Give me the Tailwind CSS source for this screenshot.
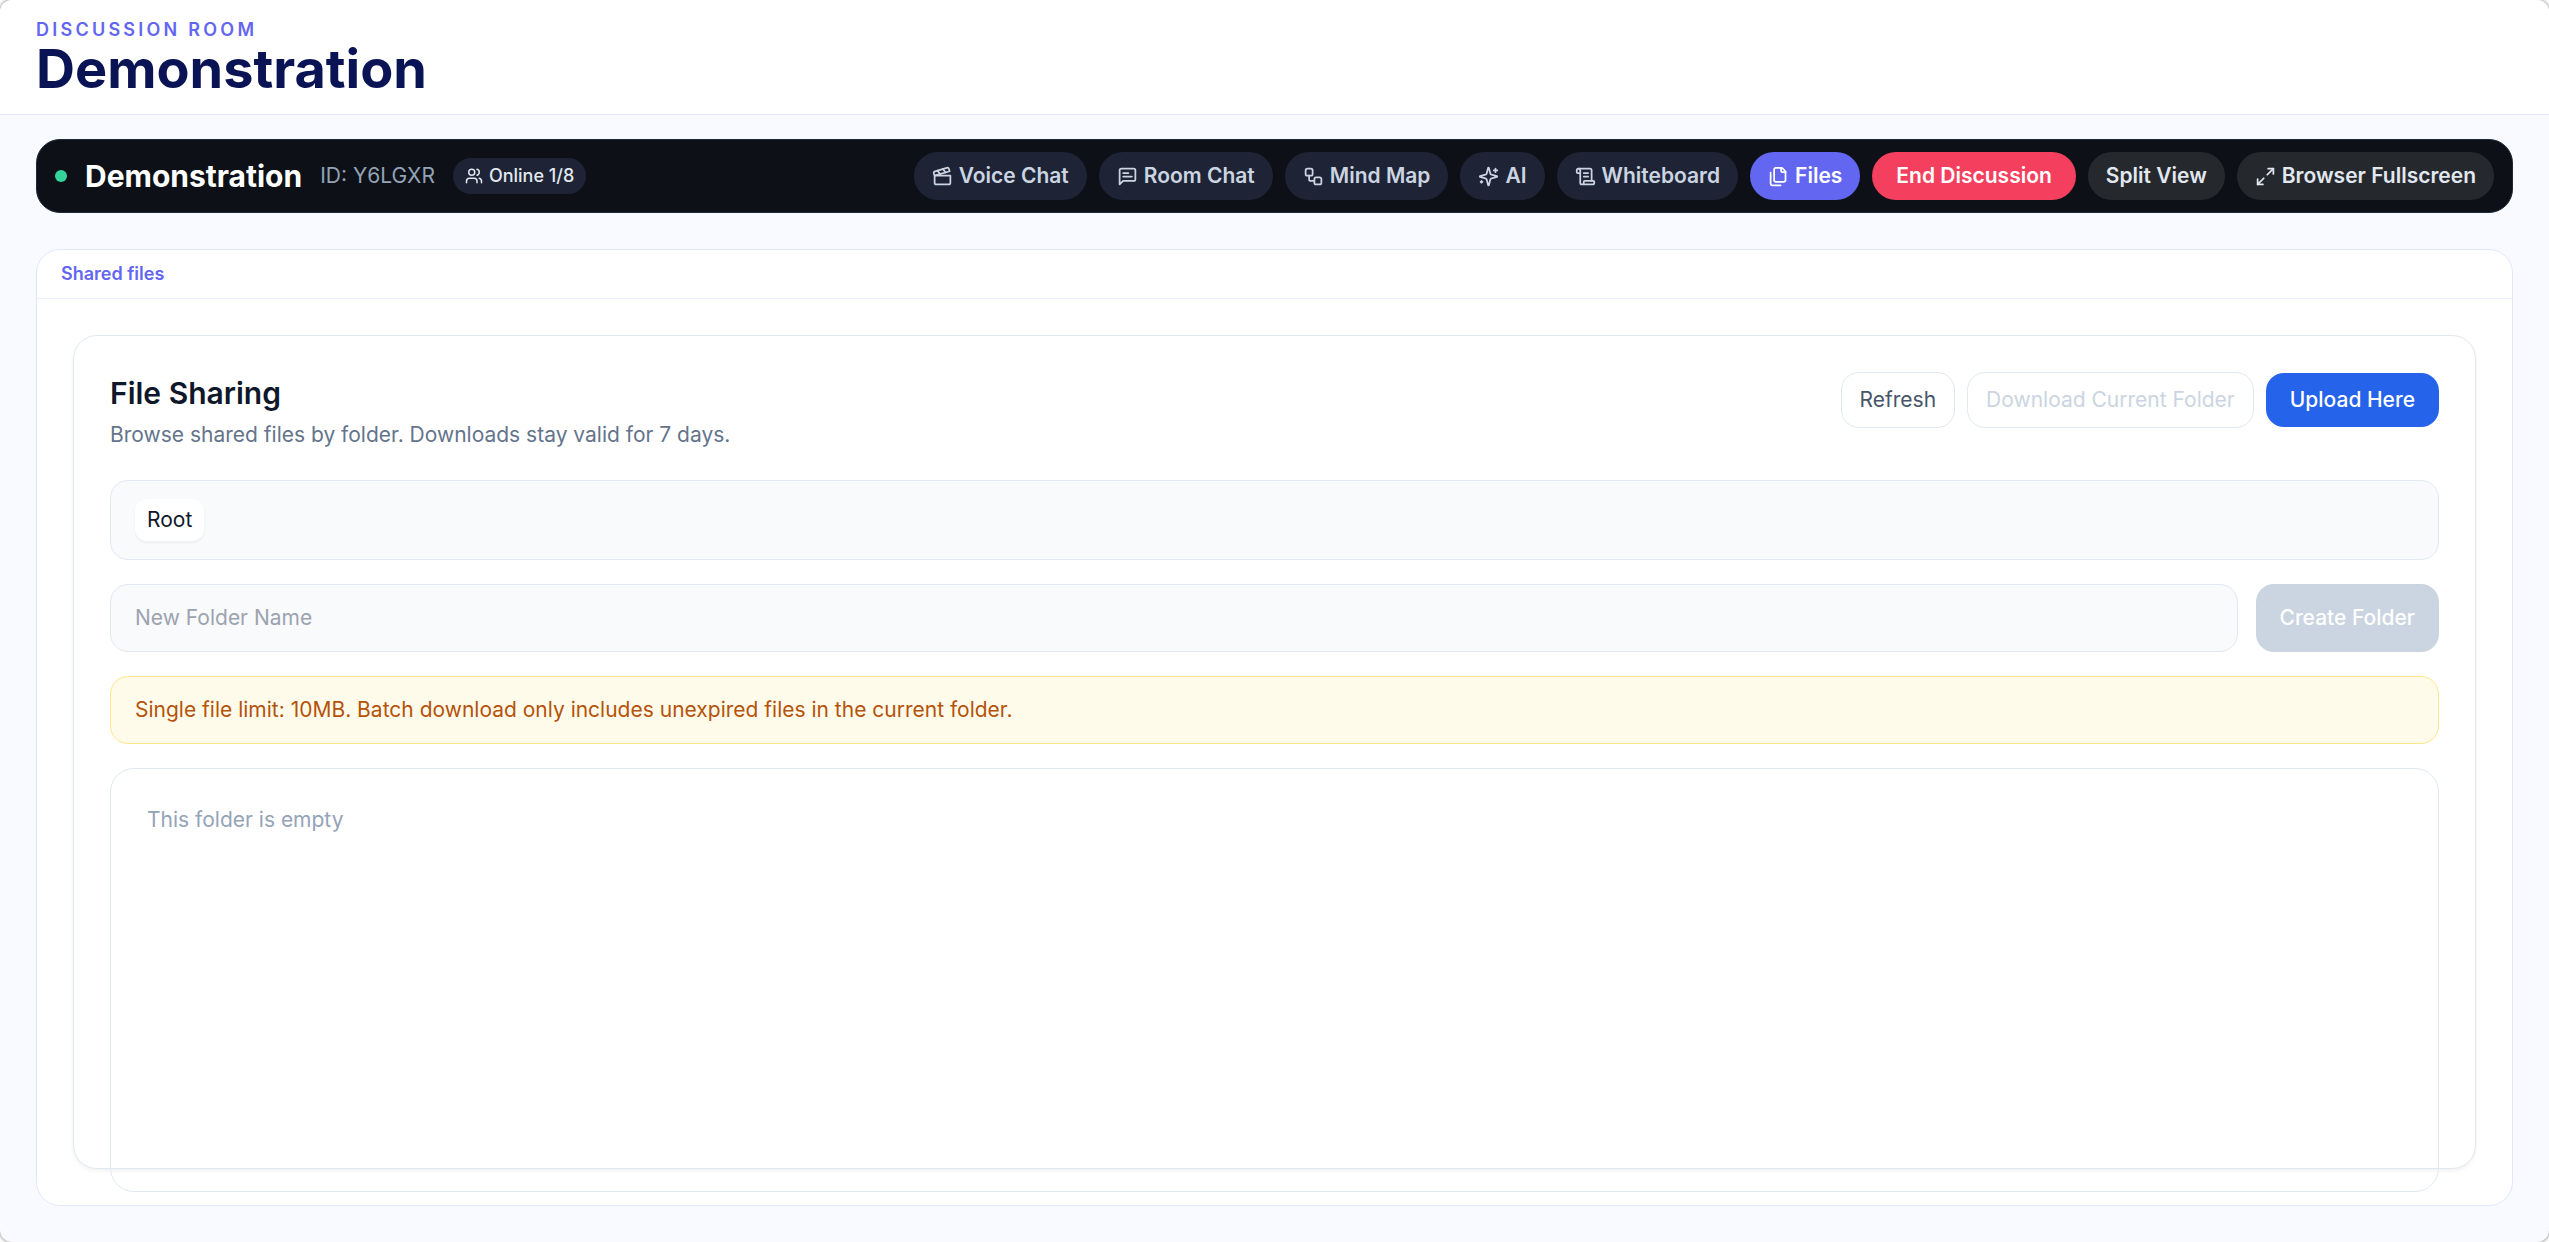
<!DOCTYPE html>
<html lang="en" class="text-[24px]">
<head>
    <meta charset="UTF-8">
    <meta name="viewport" content="width=device-width, initial-scale=1.0">
    <title>Demonstration - Discussion Room</title>
    <script src="https://cdn.jsdelivr.net/npm/@tailwindcss/browser@4"></script>
</head>
<body class="bg-white font-['Inter',sans-serif] text-base text-[#0f172a]">
    <div class="flex h-screen flex-col overflow-hidden rounded-[12px] bg-[#f8faff] shadow-[0_0_3px_1px_rgba(0,0,0,0.35)]">
        <!-- Page header -->
        <header class="border-b border-[#e0e7ff] bg-white px-6 py-3">
            <p class="text-xs font-semibold tracking-[0.18em] text-[#6366f1] uppercase">Discussion Room</p>
            <h1 class="text-4xl leading-none font-bold text-[#0a1354]">Demonstration</h1>
        </header>

        <main class="flex min-h-0 flex-1 flex-col gap-6 px-6 pt-4 pb-6">
            <!-- Room toolbar -->
            <div class="flex items-center justify-between rounded-2xl border border-[#1e293b] bg-[#0d1117] px-3 py-2">
                <div class="flex items-center gap-3">
                    <span class="size-2 rounded-full bg-[#34d399]"></span>
                    <h2 class="text-xl font-bold text-white">Demonstration</h2>
                    <span class="text-sm text-[#94a3b8]">ID: Y6LGXR</span>
                    <span class="flex items-center gap-1 rounded-full bg-[#1e2436] px-2 py-1 text-xs font-medium text-[#e2e8f0]">
                        <svg class="size-3" viewBox="0 0 24 24" fill="none" stroke="currentColor" stroke-width="2" stroke-linecap="round" stroke-linejoin="round"><path d="M16 21v-2a4 4 0 0 0-4-4H6a4 4 0 0 0-4 4v2" /><circle cx="9" cy="7" r="4" /><path d="M22 21v-2a4 4 0 0 0-3-3.87" /><path d="M16 3.13a4 4 0 0 1 0 7.75" /></svg>
                        Online 1/8
                    </span>
                </div>
                <nav class="flex items-center gap-2 text-sm font-semibold text-[#cbd5e1]">
                    <button type="button" class="flex h-8 items-center gap-1 rounded-full bg-[#1e2436] px-3">
                        <svg class="size-[21px]" viewBox="0 0 24 24" fill="none" stroke="currentColor" stroke-width="2" stroke-linecap="round" stroke-linejoin="round"><path d="M20.2 6 3 11l-.9-2.4c-.3-1.1.3-2.2 1.3-2.5l13.5-4c1.1-.3 2.2.3 2.5 1.3Z" /><path d="m6.2 5.3 3.1 3.9" /><path d="m12.4 3.4 3.1 4" /><path d="M3 11h18v8a2 2 0 0 1-2 2H5a2 2 0 0 1-2-2Z" /></svg>
                        Voice Chat
                    </button>
                    <button type="button" class="flex h-8 items-center gap-1 rounded-full bg-[#1e2436] px-3">
                        <svg class="size-[21px]" viewBox="0 0 24 24" fill="none" stroke="currentColor" stroke-width="2" stroke-linecap="round" stroke-linejoin="round"><path d="M21 15a2 2 0 0 1-2 2H7l-4 4V5a2 2 0 0 1 2-2h14a2 2 0 0 1 2 2z" /><path d="M13 8H7" /><path d="M17 12H7" /></svg>
                        Room Chat
                    </button>
                    <button type="button" class="flex h-8 items-center gap-1 rounded-full bg-[#1e2436] px-3">
                        <svg class="size-[21px]" viewBox="0 0 24 24" fill="none" stroke="currentColor" stroke-width="2" stroke-linecap="round" stroke-linejoin="round"><rect width="8" height="8" x="3" y="3" rx="2" /><path d="M7 11v4a2 2 0 0 0 2 2h4" /><rect width="8" height="8" x="13" y="13" rx="2" /></svg>
                        Mind Map
                    </button>
                    <button type="button" class="flex h-8 items-center gap-1 rounded-full bg-[#1e2436] px-3">
                        <svg class="size-[21px]" viewBox="0 0 24 24" fill="none" stroke="currentColor" stroke-width="2" stroke-linecap="round" stroke-linejoin="round"><path d="M9.937 15.5A2 2 0 0 0 8.5 14.063l-6.135-1.582a.5.5 0 0 1 0-.962L8.5 9.936A2 2 0 0 0 9.937 8.5l1.582-6.135a.5.5 0 0 1 .963 0L14.063 8.5A2 2 0 0 0 15.5 9.937l6.135 1.581a.5.5 0 0 1 0 .964L15.5 14.063a2 2 0 0 0-1.437 1.437l-1.582 6.135a.5.5 0 0 1-.963 0z" /><path d="M20 3v4" /><path d="M22 5h-4" /><path d="M4 17v2" /><path d="M5 18H3" /></svg>
                        AI
                    </button>
                    <button type="button" class="flex h-8 items-center gap-1 rounded-full bg-[#1e2436] px-3">
                        <svg class="size-[21px]" viewBox="0 0 24 24" fill="none" stroke="currentColor" stroke-width="2" stroke-linecap="round" stroke-linejoin="round"><path d="M15 12h-5" /><path d="M15 8h-5" /><path d="M19 17V5a2 2 0 0 0-2-2H4" /><path d="M8 21h12a2 2 0 0 0 2-2v-1a1 1 0 0 0-1-1H11a1 1 0 0 0-1 1v1a2 2 0 1 1-4 0V5a2 2 0 1 0-4 0v2a1 1 0 0 0 1 1h3" /></svg>
                        Whiteboard
                    </button>
                    <button type="button" class="flex h-8 items-center gap-1 rounded-full bg-[#6366f1] px-3 text-white">
                        <svg class="size-[21px]" viewBox="0 0 24 24" fill="none" stroke="currentColor" stroke-width="2" stroke-linecap="round" stroke-linejoin="round"><path d="M20 7h-3a2 2 0 0 1-2-2V2" /><path d="M9 18a2 2 0 0 1-2-2V4a2 2 0 0 1 2-2h7l4 4v10a2 2 0 0 1-2 2Z" /><path d="M3 7.6v12.8A1.6 1.6 0 0 0 4.6 22h9.8" /></svg>
                        Files
                    </button>
                    <button type="button" class="h-8 rounded-full bg-[#f43f5e] px-4 text-white">End Discussion</button>
                    <button type="button" class="h-8 rounded-full bg-white/10 px-3 text-[#e2e8f0]">Split View</button>
                    <button type="button" class="flex h-8 items-center gap-1 rounded-full bg-white/10 px-3 text-[#e2e8f0]">
                        <svg class="size-[21px]" viewBox="0 0 24 24" fill="none" stroke="currentColor" stroke-width="2" stroke-linecap="round" stroke-linejoin="round"><path d="M15 3h6v6" /><path d="m21 3-7 7" /><path d="m3 21 7-7" /><path d="M9 21H3v-6" /></svg>
                        Browser Fullscreen
                    </button>
                </nav>
            </div>

            <!-- Shared files panel -->
            <section class="flex min-h-0 flex-1 flex-col overflow-hidden rounded-2xl border border-[#e0e7ff] bg-white">
                <div class="border-b border-[#e8edff] px-4 py-2 text-xs font-semibold text-[#6366f1]">Shared files</div>
                <div class="flex min-h-0 flex-1 flex-col p-6">
                    <div class="flex min-h-0 flex-1 flex-col gap-4 rounded-2xl border border-[#e2e8f0] bg-white p-6 shadow-[0_2px_4px_rgba(0,0,0,0.06)]">
                        <div class="mb-[6px] flex items-start justify-between">
                            <div>
                                <h3 class="text-xl font-semibold">File Sharing</h3>
                                <p class="mt-1 text-sm text-[#64748b]">Browse shared files by folder. Downloads stay valid for 7 days.</p>
                            </div>
                            <div class="flex items-center gap-2 text-sm">
                                <button type="button" class="rounded-xl border border-[#e2e8f0] px-3 py-2 text-[#475569]">Refresh</button>
                                <button type="button" disabled class="rounded-xl border border-[#e2e8f0] px-3 py-2 text-[#cbd5e1]">Download Current Folder</button>
                                <button type="button" class="rounded-xl bg-[#2563eb] px-4 py-2 font-medium text-white">Upload Here</button>
                            </div>
                        </div>

                        <div class="flex rounded-xl border border-[#e2e8f0] bg-[#f8fafc] px-4 py-3 text-sm">
                            <button type="button" class="rounded-lg bg-white px-2 py-1 shadow-[0_2px_3px_rgba(0,0,0,0.05)]">Root</button>
                        </div>

                        <form class="flex gap-3 text-sm">
                            <input type="text" aria-label="New Folder Name" placeholder="New Folder Name" class="min-w-0 flex-1 rounded-xl border border-[#e2e8f0] bg-[#f8fafc] px-4 py-3 placeholder:text-[#9ca3af]">
                            <button type="submit" disabled class="rounded-xl bg-[#cbd5e1] px-4 font-medium text-white">Create Folder</button>
                        </form>

                        <p class="rounded-xl border border-[#fde68a] bg-[#fffbeb] px-4 py-3 text-sm text-[#b45309]">Single file limit: 10MB. Batch download only includes unexpired files in the current folder.</p>

                        <div class="min-h-[424px] rounded-2xl border border-[#e2e8f0] p-6 text-sm text-[#94a3b8]">This folder is empty</div>
                    </div>
                </div>
            </section>
        </main>
    </div>
</body>
</html>
